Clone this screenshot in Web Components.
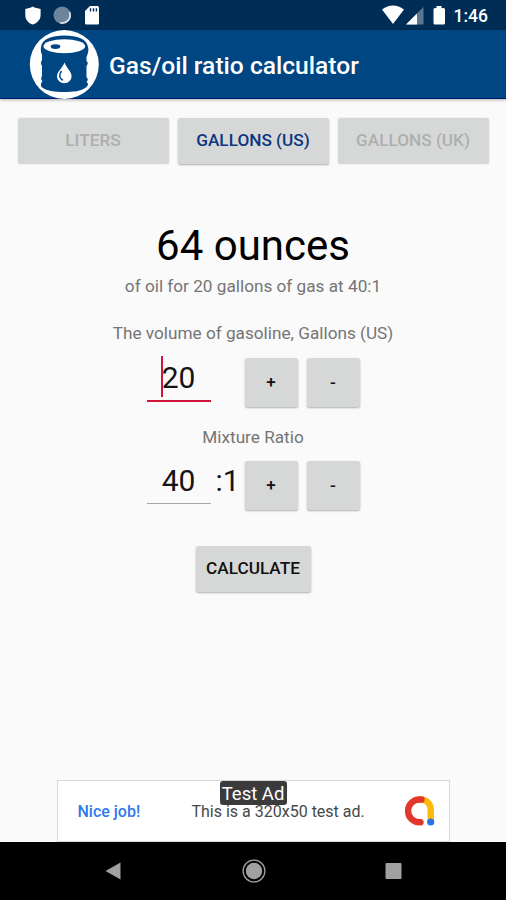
<!DOCTYPE html>
<html lang="en">
<head>
<meta charset="utf-8">
<title>Gas/oil ratio calculator</title>
<style>
  html, body {
    margin: 0;
    height: 100%;
    background: #fafafa;
    font-family: Roboto, "Liberation Sans", sans-serif;
  }
</style>
</head>
<body>
<ratio-app></ratio-app>

<script>
class StatusBar extends HTMLElement {
  constructor() {
    super();
    this.attachShadow({ mode: "open" });
    this.shadowRoot.innerHTML = `
      <style>
        :host {
          display: flex;
          justify-content: space-between;
          box-sizing: border-box;
          height: 30px;
          padding: 0 18px 0 24px;
          background: #002d55;
          color: #fff;
        }
        svg { display: block; }
        .right { display: flex; }
        span {
          font-size: 17.5px;
          font-weight: 500;
          line-height: 32px;
        }
      </style>
      <svg width="80" height="30" viewBox="24 0 80 30">
        <path d="M32.7 6.6C30.5 8 28 8.700 25.300 9V15C25.300 20 28.500 23 32.700 24.600C37 23 40.600 20 40.600 15V9C38 8.700 35 8 32.700 6.600Z" fill="#fff"/>
        <circle cx="62.200" cy="15.200" r="8.600" fill="#6c859c"/>
        <path d="M69.500 12A8 8 0 0 1 60 22.800" fill="none" stroke="#dce3ea" stroke-width="1.700"/>
        <path d="M90 6H97.500Q99 6 99 7.500V23Q99 24.500 97.500 24.500H86.500Q85 24.500 85 23V11Z" fill="#fff"/>
        <path d="M90.500 8.300v3.200M93.500 8.300v3.200M96.400 8.300v3.200" stroke="#002d55" stroke-width="1.400"/>
      </svg>
      <div class="right">
        <svg width="73" height="30" viewBox="380 0 73 30">
          <path d="M381 9.500Q392 1.500 403 9.500L392 24Z" fill="#fff"/>
          <path d="M422.500 7V24.500H405Z" fill="#5c7890"/>
          <path d="M416 13.500V24.500H405Z" fill="#fff"/>
          <path d="M435.500 6H440.500V8H442.500Q444 8 444 9.500V23Q444 24.500 442.500 24.500H434Q432.500 24.500 432.500 23V9.500Q432.500 8 434 8H435.500Z" fill="#fff"/>
        </svg>
        <span>1:46</span>
      </div>`;
  }
}
customElements.define("status-bar", StatusBar);


class AppBar extends HTMLElement {
  constructor() {
    super();
    this.attachShadow({ mode: "open" });
    this.shadowRoot.innerHTML = `
      <style>
        :host {
          display: flex;
          align-items: flex-start;
          box-sizing: border-box;
          height: 69px;
          padding-left: 29px;
          background: #004682;
          border-bottom: 1px solid #001b6e;
          box-shadow: 0 1px 3px rgba(0, 0, 0, 0.3);
          color: #fff;
        }
        svg { display: block; flex: none; }
        h1 {
          margin: 0 0 0 9px;
          font-size: 24.6px;
          font-weight: 500;
          line-height: 71px;
          white-space: nowrap;
        }
      </style>
      <svg width="71" height="70" viewBox="0 0 71 70">
        <circle cx="35.300" cy="34.500" r="34.500" fill="#fff"/>
        <path d="M12 17C13 9 23 5.500 35.500 5.500S58 9 59 17C60 20 59 24 57.500 27V31Q60 33 57.500 36V47Q60 49.500 57.500 52Q60.500 54 57.500 57C52 61.500 44 62 35 62S17 61 12.500 57Q11 54 13.500 51Q11 49 13 46V36Q11 33 13 30V25C12 22 11.500 20 12 17Z" fill="#004682"/>
        <ellipse cx="35.300" cy="16.300" rx="20.800" ry="7" fill="#fff"/>
        <ellipse cx="26.500" cy="16.600" rx="4.800" ry="2.400" fill="#004682"/>
        <path d="M35.500 32.500C33.500 38 28 41.500 28 46.500A7.300 6.800 0 0 0 42.600 46.500C42.600 41.500 37.500 38 35.500 32.500Z" fill="#fff"/>
        <path d="M32.500 41C29.800 44.500 30 48.500 34 50.300" fill="none" stroke="#004682" stroke-width="1.500"/>
      </svg>
      <h1><slot></slot></h1>`;
  }
}
customElements.define("app-bar", AppBar);


class RaisedButton extends HTMLElement {
  constructor() {
    super();
    this.attachShadow({ mode: "open" });
    this.shadowRoot.innerHTML = `
      <style>
        :host { display: block; height: 46px; }
        button {
          display: block;
          width: 100%;
          height: 100%;
          margin: 0;
          padding: 0;
          border: 0;
          border-radius: 2.500px;
          background: #d6d8d7;
          box-shadow: 0 1px 2px rgba(0, 0, 0, 0.3);
          color: #111;
          font: 500 17.2px/1 Roboto, "Liberation Sans", sans-serif;
          white-space: nowrap;
        }
        :host([disabled]) button {
          color: #adafae;
          box-shadow: 0 0 2px rgba(0, 0, 0, 0.14);
        }
        :host([selected]) button { color: #0b3681; }
      </style>
      <button><slot></slot></button>`;
  }
}
customElements.define("raised-button", RaisedButton);


class NumberStepper extends HTMLElement {
  constructor() {
    super();
    this.attachShadow({ mode: "open" });
    this.value = this.getAttribute("value");
    this.suffix = this.getAttribute("suffix") || "";

    this.shadowRoot.innerHTML = `
      <style>
        :host {
          display: flex;
          width: 213px;
          height: 49px;
        }
        .field {
          box-sizing: border-box;
          width: 64px;
          height: 43px;
          border-bottom: 1.500px solid #a5a5a5;
          text-align: center;
        }
        :host([focused]) .field {
          height: 44px;
          border-bottom: 2px solid #d0143c;
        }
        .field, .suffix {
          color: #151515;
          font-size: 30px;
          line-height: 40px;
        }
        .field span { position: relative; }
        /* text cursor sits over the first digit */
        :host([focused]) .field span::before {
          content: "";
          position: absolute;
          left: -1px;
          top: -4px;
          width: 2px;
          height: 41px;
          background: #d0143c;
        }
        .suffix { width: 34px; padding-left: 5px; box-sizing: border-box; }
        raised-button { width: 53px; height: 49px; }
        raised-button + raised-button { margin-left: 9px; }
      </style>
      <div class="field"><span>${this.value}</span></div>
      <div class="suffix">${this.suffix}</div>
      <raised-button id="plus">+</raised-button>
      <raised-button id="minus">-</raised-button>`;

    this.shadowRoot.querySelector("#plus").addEventListener("click", () => this.step(1));
    this.shadowRoot.querySelector("#minus").addEventListener("click", () => this.step(-1));
  }

  step(delta) {
    this.value = Math.max(1, Number(this.value) + delta);
    this.shadowRoot.querySelector(".field span").textContent = this.value;
  }
}
customElements.define("number-stepper", NumberStepper);


class AdBanner extends HTMLElement {
  constructor() {
    super();
    this.attachShadow({ mode: "open" });
    this.shadowRoot.innerHTML = `
      <style>
        :host {
          display: flex;
          align-items: center;
          position: relative;
          box-sizing: border-box;
          width: 393px;
          height: 62px;
          padding: 0 14px 0 20px;
          border: 1px solid #d5d9d9;
          background: #fff;
          white-space: nowrap;
        }
        .title {
          width: 114px;
          color: #3079ed;
          font-size: 16px;
          font-weight: 500;
        }
        .text { flex: 1; color: #484848; font-size: 16px; }
        .badge {
          position: absolute;
          left: 162px;
          top: 0;
          width: 67px;
          height: 24px;
          border-radius: 3px;
          background: #3b3b3b;
          color: #fff;
          font-size: 18.500px;
          line-height: 26px;
          text-align: center;
        }
        svg { display: block; }
      </style>
      <span class="title">Nice job!</span>
      <span class="text">This is a 320x50 test ad.</span>
      <svg width="32" height="32" viewBox="0 0 32 32" fill="none" stroke-width="6.400" stroke-linecap="round">
        <path d="M17 4.500C24 4.500 27.700 9 27.700 15V26" stroke="#fbb90c"/>
        <path d="M18.500 4.500H16.500A11.400 11.400 0 0 0 16.500 27.300H17.500" stroke="#e2382b"/>
        <circle cx="27.700" cy="27" r="3.600" fill="#2a72e6"/>
      </svg>
      <span class="badge">Test Ad</span>`;
  }
}
customElements.define("ad-banner", AdBanner);


class NavBar extends HTMLElement {
  constructor() {
    super();
    this.attachShadow({ mode: "open" });
    this.shadowRoot.innerHTML = `
      <style>
        :host {
          display: flex;
          justify-content: space-between;
          align-items: center;
          box-sizing: border-box;
          height: 58px;
          padding: 0 101px 0 102px;
          background: #000;
        }
        svg { display: block; }
      </style>
      <svg width="24" height="24" viewBox="0 0 24 24"><path d="M3.500 12L18.500 3.500V20.500Z" fill="#a0a0a0"/></svg>
      <svg width="24" height="24" viewBox="0 0 24 24">
        <circle cx="12" cy="12" r="10.900" fill="none" stroke="#a0a0a0" stroke-width="1.300"/>
        <circle cx="12" cy="12" r="8.200" fill="#a0a0a0"/>
      </svg>
      <svg width="24" height="24" viewBox="0 0 24 24"><rect x="4.500" y="4" width="16" height="16" rx="1" fill="#a0a0a0"/></svg>`;
  }
}
customElements.define("nav-bar", NavBar);


class RatioApp extends HTMLElement {
  constructor() {
    super();
    this.attachShadow({ mode: "open" });
    this.shadowRoot.innerHTML = `
      <style>
        :host {
          display: flex;
          flex-direction: column;
          width: 506px;
          height: 900px;
          overflow: hidden;
          background: #fafafa;
        }
        main {
          flex: 1;
          display: flex;
          flex-direction: column;
          align-items: center;
        }
        .units {
          display: grid;
          grid-template-columns: repeat(3, 151px);
          gap: 9px;
          margin-top: 19px;
        }
        .result {
          margin-top: 57px;
          color: #000;
          font-size: 42px;
          line-height: 50px;
        }
        .note {
          color: #757575;
          font-size: 17.2px;
          line-height: 22px;
        }
        .result + .note { margin-top: 4px; }
        .volume { margin-top: 25px; }
        .volume + number-stepper { margin-top: 14px; }
        .ratio { margin-top: 19px; }
        .ratio + number-stepper { margin-top: 13px; }
        .calculate { width: 115px; margin-top: 36px; }
        ad-banner { margin-top: auto; }
      </style>
      <status-bar></status-bar>
      <app-bar>Gas/oil ratio calculator</app-bar>
      <main>
        <div class="units">
          <raised-button disabled>LITERS</raised-button>
          <raised-button selected>GALLONS (US)</raised-button>
          <raised-button disabled>GALLONS (UK)</raised-button>
        </div>
        <div class="result">64 ounces</div>
        <div class="note">of oil for 20 gallons of gas at 40:1</div>
        <div class="note volume">The volume of gasoline, Gallons (US)</div>
        <number-stepper value="20" focused></number-stepper>
        <div class="note ratio">Mixture Ratio</div>
        <number-stepper value="40" suffix=":1"></number-stepper>
        <raised-button class="calculate">CALCULATE</raised-button>
        <ad-banner></ad-banner>
      </main>
      <nav-bar></nav-bar>`;
  }
}
customElements.define("ratio-app", RatioApp);
</script>
</body>
</html>
